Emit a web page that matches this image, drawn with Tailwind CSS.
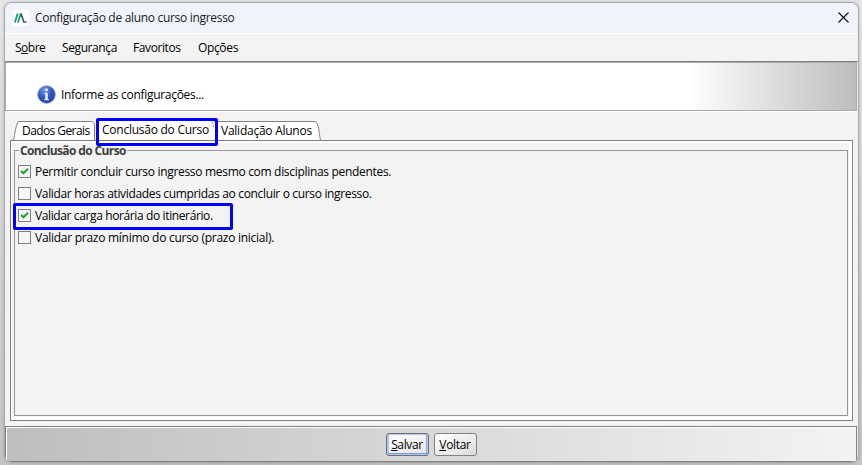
<!DOCTYPE html>
<html lang="pt-BR">
<head>
<meta charset="utf-8">
<title>Configuração de aluno curso ingresso</title>
<script src="https://cdn.jsdelivr.net/npm/@tailwindcss/browser@4"></script>
</head>
<body class="w-[862px] h-[465px] overflow-hidden bg-linear-to-b from-[#e6e6e6] via-[#d2d2d2] to-[#c4c4c4] pt-[2px] pl-[4px] font-['Open_Sans','Noto_Sans',sans-serif] text-[12px] leading-[16px] text-black whitespace-nowrap">
<div class="w-[855px] h-[461px] rounded-[8px] border border-[#a9a9a9] bg-[#f3f3f3] overflow-hidden flex flex-col shadow-[0_0_3px_rgba(0,0,0,0.2)]">
  <header class="h-[30px] shrink-0 bg-[#f0f3f9] flex items-center pl-[8px] pr-[9px]">
    <svg class="w-4 h-4 shrink-0" viewBox="0 0 16 16"><rect width="16" height="16" rx="2" fill="#fff"/><path d="M1.800 12.5 4.800 3.500M4.900 12.5 7.900 3.500" stroke="#16a085" stroke-width="1.9"/><path d="M8 3.500 10.800 12H13.500" fill="none" stroke="#4a4f55" stroke-width="1.6"/></svg>
    <h1 class="ml-[6px] tracking-[-0.31px] text-[#1a1a1a]">Configuração de aluno curso ingresso</h1>
    <svg class="ml-auto w-[11px] h-[11px] relative top-[-1px]" viewBox="0 0 11 11"><path d="M.5 .5 10.5 10.5M10.5 .5 .5 10.5" stroke="#111" stroke-width="1.1"/></svg>
  </header>
  <nav class="h-[29px] shrink-0 border-t border-t-white border-b border-b-[#808080] flex items-center pl-[10px]">
    <span class="w-[47px] tracking-[-0.5px]">S<u>o</u>bre</span><span class="w-[71px] tracking-[-0.4px]">Segurança</span><span class="w-[65px] tracking-[-0.4px]">Favoritos</span><span class="tracking-[-0.35px]">Opções</span>
  </nav>
  <section class="h-[49px] w-[852px] shrink-0 border border-[#a9a9a9] bg-[linear-gradient(90deg,#fff_0,#fff_682px,#bdbdbd_850px)] flex items-start pl-[31px] pt-[22px] shadow-[0_1px_0_#fff]">
    <svg class="w-5 h-5" viewBox="0 0 20 20"><defs><radialGradient id="g" cx=".4" cy=".25" r=".8"><stop offset="0" stop-color="#6f94e0"/><stop offset=".55" stop-color="#2c55bd"/><stop offset="1" stop-color="#1a3da0"/></radialGradient></defs><circle cx="9.500" cy="9.500" r="9" fill="url(#g)" stroke="#b9bfca" stroke-width="1"/><circle cx="9.500" cy="4.800" r="1.600" fill="#dde5fa"/><path d="M7.300 7.700h3.600v6.300h1v1.300H7.100v-1.300h1V9h-.8z" fill="#dde5fa"/></svg>
    <p class="ml-[4px] mt-[2px] tracking-[-0.3px]">Informe as configurações...</p>
  </section>
  <main class="flex-1 pl-[5px] pt-[10px]">
    <div class="h-[19px] flex items-end relative">
      <div class="relative w-[86px] h-[19px] ml-[3px] pl-[9px] pt-[2px]"><svg class="absolute left-0 top-0 w-[86px] h-[19px]" viewBox="0 0 86 19"><path d="M.5 19C2 14 2.500 4 5.500 .5H78Q81.500 .5 81.500 5V19" fill="#fff" stroke="#808080"/></svg><span class="relative tracking-[-0.58px]">Dados Gerais</span></div>
      <div class="relative w-[115px] h-[22px] bg-white pl-[3px] pt-[4px]"><span class="tracking-[-0.25px]">Conclusão do Curso</span><svg class="absolute right-0 top-0 w-[5px] h-[10px]" viewBox="0 0 5 10"><path d="M.5 .5Q3.500 2 4.500 9" fill="none" stroke="#808080" stroke-dasharray="3 1"/></svg></div>
      <div class="relative w-[108px] h-[19px] pl-[7px] pt-[2px]"><svg class="absolute left-0 top-0 w-[108px] h-[19px]" viewBox="0 0 108 19"><path d="M0 .5H101C105 1.500 105 13 106.500 19H0" fill="#fff"/><path d="M0 .5H101C105 1.500 105 13 106.500 19" fill="none" stroke="#808080"/></svg><span class="relative tracking-[-0.25px]">Validação Alunos</span></div>
      <div class="absolute left-[86px] top-[-3px] w-[122px] h-[28px] border-[3px] border-[#0000ff] rounded-[2px] z-10"></div>
    </div>
    <div class="w-[843px] h-[281px] border border-[#808080] p-[3px] pt-[9px] shadow-[inset_0_2px_0_#fff,inset_-3px_-3px_0_#fff,inset_1px_0_0_#fff]">
      <section class="relative w-[834px] h-[266px] border border-[#969696] pt-[10px] pl-[3px]">
        <h2 class="absolute left-[4px] top-[-8px] bg-[#f3f3f3] px-[1px] font-bold text-[#404040] tracking-[-0.62px]">Conclusão do Curso</h2>
        <div class="h-[22px] flex items-center"><svg class="w-[13px] h-[13px] mr-[4px] relative top-[-1px]" viewBox="0 0 13 13"><rect x=".5" y=".5" width="12" height="12" fill="#f6f6f6" stroke="#808080"/><path d="M3 6 5.500 8.200 10 3.800" fill="none" stroke="#22a33a" stroke-width="2.200"/></svg><span class="tracking-[-0.31px]">Permitir concluir curso ingresso mesmo com disciplinas pendentes.</span></div>
        <div class="h-[22px] flex items-center"><svg class="w-[13px] h-[13px] mr-[4px] relative top-[-1px]" viewBox="0 0 13 13"><rect x=".5" y=".5" width="12" height="12" fill="#f6f6f6" stroke="#808080"/></svg><span class="tracking-[-0.34px]">Validar horas atividades cumpridas ao concluir o curso ingresso.</span></div>
        <div class="h-[22px] flex items-center relative"><svg class="w-[13px] h-[13px] mr-[4px] relative top-[-1px]" viewBox="0 0 13 13"><rect x=".5" y=".5" width="12" height="12" fill="#f6f6f6" stroke="#808080"/><path d="M3 6 5.500 8.200 10 3.800" fill="none" stroke="#22a33a" stroke-width="2.200"/></svg><span class="tracking-[-0.38px]">Validar carga horária do itinerário.</span><div class="absolute left-[-5px] top-[-2px] w-[220px] h-[27px] border-[3px] border-[#0000ff] rounded-[2px]"></div></div>
        <div class="h-[22px] flex items-center"><svg class="w-[13px] h-[13px] mr-[4px] relative top-[-1px]" viewBox="0 0 13 13"><rect x=".5" y=".5" width="12" height="12" fill="#f6f6f6" stroke="#808080"/></svg><span class="tracking-[-0.27px]">Validar prazo mínimo do curso (prazo inicial).</span></div>
      </section>
    </div>
  </main>
  <footer class="w-[852px] h-[36px] shrink-0 border border-[#808080] bg-linear-to-r from-[#bebebe] to-[#f3f3f3] shadow-[inset_1px_1px_0_#fff] flex justify-center gap-[5px] pt-[6px]">
    <button class="w-[43px] h-[23px] rounded-[3px] border border-[#707070] bg-linear-to-br from-white to-[#e4e4e4] shadow-[inset_0_0_0_1px_#b4cbef,inset_0_-2px_0_#6f9ae0,inset_-2px_0_0_#86a9e2,inset_2px_0_0_#a9c3ee] tracking-[-0.35px]"><u>S</u>alvar</button>
    <button class="w-[43px] h-[23px] rounded-[3px] border border-[#808080] bg-linear-to-br from-white to-[#dcdcdc] tracking-[-0.3px]"><u>V</u>oltar</button>
  </footer>
</div>
</body>
</html>
